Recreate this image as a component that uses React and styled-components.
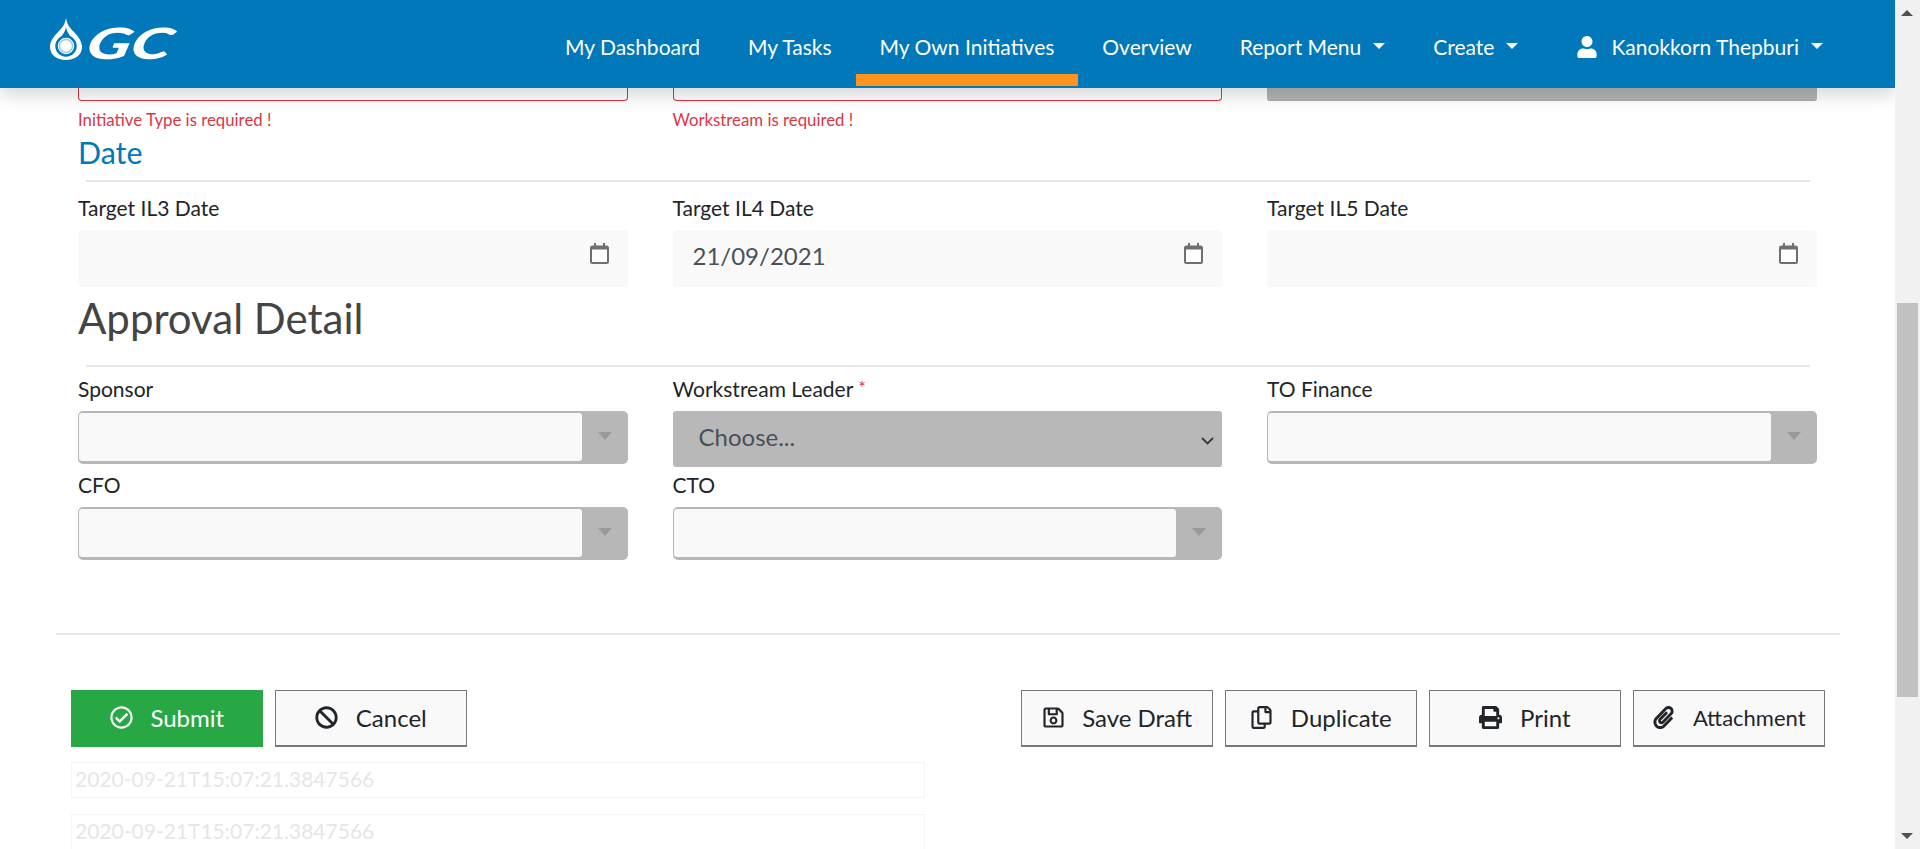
import React from 'react'
import styled, { createGlobalStyle } from 'styled-components'
import { FaBan, FaPaperclip, FaPrint, FaRegCheckCircle, FaRegCopy, FaRegSave, FaUser } from 'react-icons/fa'

const GlobalStyle = createGlobalStyle`
  * { box-sizing: border-box; }
  html, body { margin: 0; padding: 0; height: 100%; overflow: hidden; background: #fff; }
  body { font-family: Lato, "Noto Sans", sans-serif; color: #212529; }
`

const navLinks = [
  { text: 'My Dashboard' },
  { text: 'My Tasks' },
  { text: 'My Own Initiatives', active: true },
  { text: 'Overview' },
  { text: 'Report Menu', caret: true },
  { text: 'Create', caret: true },
]

const Drop = () => (
  <svg width="32" height="42" viewBox="0 0 32 42" fill="none">
    <path d="M16 0c1 6 3 9 8 14 5 5 8 10 8 15 0 8-7 13-16 13S0 37 0 29c0-5 3-10 8-15 5-5 7-8 8-14z" fill="#fff" />
    <path d="M16 9c1 5 3 7 5 10-2-1-3-1-5-1s-3 0-5 1c2-3 4-5 5-10z" fill="#0078b9" />
    <circle cx="16" cy="28" r="9.5" stroke="#0078b9" strokeWidth="2.5" />
    <circle cx="16" cy="28" r="6.5" stroke="#9ccbe6" strokeWidth="1.5" />
  </svg>
)

const CalendarIcon = () => (
  <svg width="19" height="21" viewBox="0 0 19 21" fill="none">
    <rect x="1" y="3.5" width="17" height="16.5" rx="1.5" fill="#fff" stroke="#6f6f6f" strokeWidth="2" />
    <rect x="1" y="3" width="17" height="3.5" fill="#6f6f6f" />
    <rect x="4" y="0" width="2" height="4" fill="#6f6f6f" />
    <rect x="13" y="0" width="2" height="4" fill="#6f6f6f" />
  </svg>
)

const Chevron = () => (
  <svg width="13" height="8" viewBox="0 0 13 8" fill="none">
    <path d="M1 1l5.5 5.5L12 1" stroke="#343a40" strokeWidth="1.8" />
  </svg>
)

const DateField = ({ label, value }) => (
  <div>
    <Label>{label}</Label>
    <DateBox>
      <span>{value}</span>
      <CalendarIcon />
    </DateBox>
  </div>
)

const SelectField = ({ label }) => (
  <div>
    <Label>{label}</Label>
    <Control>
      <ControlValue />
      <Indicator />
    </Control>
  </div>
)

const App = () => {
  return (
    <Page>
      <GlobalStyle />
      <Main>
        <Navbar>
          <Brand>
            <Drop />
            <BrandText>GC</BrandText>
          </Brand>
          <NavList>
            {navLinks.map(({ text, active, caret }) => (
              <NavLink key={text} $active={active} $caret={caret}>{text}</NavLink>
            ))}
            <UserLink $caret>
              <FaUser size={22} />
              Kanokkorn Thepburi
            </UserLink>
          </NavList>
        </Navbar>

        <Form>
          <Columns>
            <div>
              <InvalidBox />
              <ErrorText>Initiative Type is required !</ErrorText>
            </div>
            <div>
              <InvalidBox />
              <ErrorText>Workstream is required !</ErrorText>
            </div>
            <DisabledBox />
          </Columns>

          <SubTitle>Date</SubTitle>
          <SectionLine $top={11} />
          <Columns $top={14}>
            <DateField label="Target IL3 Date" />
            <DateField label="Target IL4 Date" value="21/09/2021" />
            <DateField label="Target IL5 Date" />
          </Columns>

          <Title>Approval Detail</Title>
          <SectionLine $top={23} />
          <Columns $top={10}>
            <SelectField label="Sponsor" />
            <div>
              <Label>Workstream Leader <Required>*</Required></Label>
              <DisabledSelect>
                Choose...
                <Chevron />
              </DisabledSelect>
            </div>
            <SelectField label="TO Finance" />
          </Columns>
          <Columns $top={9}>
            <SelectField label="CFO" />
            <SelectField label="CTO" />
          </Columns>
        </Form>

        <FooterLine />

        <Actions>
          <ActionGroup>
            <ActionButton $primary><FaRegCheckCircle size={23} />Submit</ActionButton>
            <ActionButton><FaBan size={23} />Cancel</ActionButton>
          </ActionGroup>
          <ActionGroup>
            <ActionButton><FaRegSave size={23} />Save Draft</ActionButton>
            <ActionButton><FaRegCopy size={23} />Duplicate</ActionButton>
            <ActionButton><FaPrint size={23} />Print</ActionButton>
            <ActionButton $small><FaPaperclip size={23} />Attachment</ActionButton>
          </ActionGroup>
        </Actions>

        <Stamps>
          <Stamp>2020-09-21T15:07:21.3847566</Stamp>
          <Stamp>2020-09-21T15:07:21.3847566</Stamp>
        </Stamps>
      </Main>

      <ScrollTrack>
        <ScrollArrow />
        <ScrollThumb />
        <ScrollArrow $down />
      </ScrollTrack>
    </Page>
  )
}

export default App

const Page = styled.div`
  display: flex;
  width: 1920px;
  height: 849px;
  overflow: hidden;
`
const Main = styled.div`
  flex: 1;
  min-width: 0;
  overflow: hidden;
`
const Navbar = styled.header`
  position: relative;
  z-index: 2;
  display: flex;
  justify-content: space-between;
  height: 88px;
  padding: 0 48px 0 50px;
  background: #0078b9;
  box-shadow: 0 8px 16px rgba(0, 0, 0, 0.15);
`
const Brand = styled.div`
  display: flex;
  align-items: flex-start;
  gap: 6px;
  padding-top: 18px;
`
const BrandText = styled.span`
  display: block;
  width: 89px;
  margin-top: 3px;
  color: #fff;
  font-size: 43px;
  line-height: 44px;
  font-weight: 900;
  font-style: italic;
  transform: skewX(-14deg) scaleX(1.52);
  transform-origin: left center;
`
const NavList = styled.nav`
  display: flex;
  align-items: flex-start;
`
const NavLink = styled.a`
  display: flex;
  align-items: flex-start;
  height: 86px;
  padding: 35px 24px 0;
  color: #fff;
  font-size: 21px;
  line-height: 24px;
  white-space: nowrap;
  border-bottom: 12px solid ${(p) => (p.$active ? '#ff931e' : 'transparent')};

  ${(p) => p.$caret && `
    &::after {
      content: '';
      margin: 8px 0 0 12px;
      border-top: 6px solid #fff;
      border-left: 6px solid transparent;
      border-right: 6px solid transparent;
    }
  `}
`
const UserLink = styled(NavLink)`
  margin-left: 10px;

  svg {
    margin-right: 13px;
    margin-top: 1px;
  }
`
const Form = styled.main`
  padding: 0 78px;
`
const Columns = styled.div`
  display: grid;
  grid-template-columns: repeat(3, 549.5px);
  column-gap: 45px;
  margin-top: ${(p) => p.$top || 0}px;
`
const InvalidBox = styled.div`
  height: 13px;
  border: 1px solid #dc3545;
  border-top: none;
  border-radius: 0 0 4px 4px;
`
const DisabledBox = styled.div`
  height: 13px;
  background: #b4b4b4;
  border-bottom: 1px solid #a8a8a8;
  border-radius: 0 0 3px 3px;
`
const ErrorText = styled.div`
  margin-top: 8px;
  color: #dc3545;
  font-size: 16.8px;
  line-height: 22px;
`
const SubTitle = styled.h4`
  margin: 4px 0 0;
  color: #0078b9;
  font-size: 30.4px;
  line-height: 34px;
  font-weight: 400;
`
const Title = styled.h2`
  margin: 7px 0 0;
  color: #444;
  font-size: 42px;
  line-height: 48px;
  font-weight: 400;
`
const SectionLine = styled.div`
  height: 2px;
  margin: ${(p) => p.$top}px 7px 0 8px;
  background: #e7e7e7;
`
const Label = styled.label`
  display: block;
  height: 24px;
  margin-bottom: 10px;
  font-size: 21px;
  line-height: 24px;
`
const Required = styled.span`
  position: relative;
  top: -3px;
  color: #dc3545;
  font-size: 18px;
`
const DateBox = styled.div`
  display: flex;
  align-items: flex-start;
  justify-content: space-between;
  height: 57px;
  padding: 12px 19px 0 20px;
  background: #f9f9f9;
  border-radius: 3px;
  color: #495057;
  font-size: 24px;
  line-height: 28px;

  svg {
    margin-top: 1px;
  }
`
const Control = styled.div`
  display: flex;
  height: 53px;
  background: #b7b7b7;
  border-radius: 5px;
  padding: 2px 0 3px 1px;
`
const ControlValue = styled.div`
  flex: 1;
  background: #f9f9f9;
  border-radius: 3px;
`
const Indicator = styled.div`
  display: flex;
  align-items: center;
  justify-content: center;
  width: 46px;

  &::after {
    content: '';
    margin-bottom: 3px;
    border-top: 8px solid #999;
    border-left: 7.5px solid transparent;
    border-right: 7.5px solid transparent;
  }
`
const DisabledSelect = styled.div`
  display: flex;
  align-items: center;
  justify-content: space-between;
  height: 56px;
  margin-bottom: -3px;
  padding: 0 8px 5px 26px;
  background: #b8b8b8;
  border-radius: 3px;
  color: #495057;
  font-size: 24px;

  svg {
    margin-top: 8px;
  }
`
const FooterLine = styled.div`
  height: 2px;
  margin: 73px 55px 0 56px;
  background: #e7e7e7;
`
const Actions = styled.div`
  display: flex;
  justify-content: space-between;
  margin-top: 55px;
  padding: 0 70px 0 71px;
`
const ActionGroup = styled.div`
  display: flex;
  gap: 12px;
`
const ActionButton = styled.button`
  display: flex;
  align-items: center;
  justify-content: center;
  gap: 17.5px;
  width: 192px;
  height: 57px;
  padding: 0 0 2px;
  font-family: inherit;
  font-size: ${(p) => (p.$small ? '22px' : '24px')};
  color: ${(p) => (p.$primary ? '#fff' : '#212529')};
  background: ${(p) => (p.$primary ? '#28a745' : '#f9f9f9')};
  border: ${(p) => (p.$primary ? 'none' : '1px solid #777')};
  border-bottom-width: ${(p) => (p.$primary ? '0' : '2px')};
`
const Stamps = styled.div`
  display: flex;
  flex-direction: column;
  gap: 16px;
  margin: 15px 0 0 71px;
`
const Stamp = styled.div`
  width: 854px;
  height: 36px;
  padding-left: 3px;
  border: 1px solid #f5f5f5;
  color: #e6e6e6;
  font-size: 21px;
  line-height: 32px;
`
const ScrollTrack = styled.div`
  display: flex;
  flex-direction: column;
  align-items: flex-start;
  width: 25px;
  background: #f1f1f1;
`
const ScrollArrow = styled.div`
  width: 0;
  height: 0;
  margin: ${(p) => (p.$down ? 'auto 0 10px 6px' : '10px 0 0 6px')};
  border-left: 6px solid transparent;
  border-right: 6px solid transparent;
  ${(p) => (p.$down ? 'border-top: 6px solid #505050;' : 'border-bottom: 6px solid #505050;')}
`
const ScrollThumb = styled.div`
  width: 21px;
  height: 394px;
  margin: 287px 0 0 2px;
  background: #c1c1c1;
`
